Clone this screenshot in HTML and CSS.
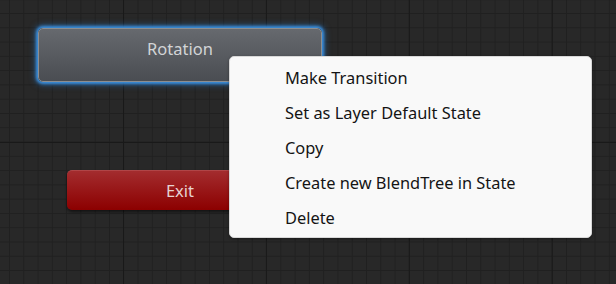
FILE: index.html
```html
<!DOCTYPE html>
<html lang="en">

<head>
    <meta charset="UTF-8">
    <meta name="viewport" content="width=device-width, initial-scale=1.0">
    <title>Animator</title>
    <link rel="stylesheet" href="styles.css">
</head>

<body>
    <div class="graph">
        <div class="node node-rotation">Rotation</div>
        <div class="node node-exit">Exit</div>

        <ul class="menu">
            <li class="menu-item">Make Transition</li>
            <li class="menu-item">Set as Layer Default State</li>
            <li class="menu-item">Copy</li>
            <li class="menu-item">Create new BlendTree in State</li>
            <li class="menu-item">Delete</li>
        </ul>
    </div>
</body>

</html>
```

FILE: styles.css
```css
body {
    margin: 0;
    font-family: "Noto Sans", "Open Sans", sans-serif;
    background-color: #282828;
}

.graph {
    position: relative;
    width: 616px;
    height: 284px;
    overflow: hidden;
    background-color: #282828;
    background-image:
        linear-gradient(to right, #191919 1px, transparent 1px),
        linear-gradient(to bottom, #191919 1px, transparent 1px),
        linear-gradient(to right, #202020 1px, transparent 1px),
        linear-gradient(to bottom, #202020 1px, transparent 1px);
    background-size:
        142.9px 142.9px,
        142.9px 142.9px,
        14.29px 14.29px,
        14.29px 14.29px;
    background-position:
        123px 0,
        0 142px,
        9px 0,
        0 13px;
}

/* state nodes sit at their place on the canvas */
.node {
    position: absolute;
    box-sizing: border-box;
    border-radius: 5px;
    font-size: 16.5px;
    text-align: center;
}

.node-rotation {
    left: 38px;
    top: 28px;
    width: 284px;
    height: 54px;
    padding-top: 8px;
    color: #d2d4d6;
    background: linear-gradient(to bottom, #66696e, #4a4d52);
    border: 1px solid #8b8e92;
    box-shadow: 0 0 3px 2px #3c8fdc, 0 0 6px 3px rgba(40, 120, 200, 0.5);
}

.node-exit {
    left: 67px;
    top: 170px;
    width: 226px;
    height: 40px;
    padding-top: 8px;
    color: #e6d2d2;
    background: linear-gradient(to bottom, #a32c2e, #8c0000);
    border-top: 1px solid #b04547;
    box-shadow: 0 2px 3px rgba(0, 0, 0, 0.5);
}

.menu {
    position: absolute;
    left: 229px;
    top: 56px;
    width: 363px;
    box-sizing: border-box;
    margin: 0;
    padding: 3px 0 2px;
    list-style: none;
    background-color: #f9f9f9;
    border: 1px solid #d8d8d8;
    border-radius: 5px;
    box-shadow: 0 1px 3px rgba(0, 0, 0, 0.35);
}

.menu-item {
    height: 35px;
    line-height: 36px;
    padding-left: 55px;
    font-size: 16.4px;
    color: #141414;
}
```
